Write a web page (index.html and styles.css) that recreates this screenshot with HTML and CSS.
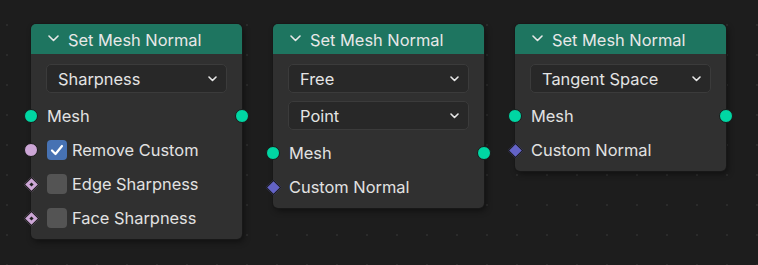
FILE: index.html
```html
<!DOCTYPE html>
<html lang="en">

	<head>
		<meta charset="UTF-8">
		<title>Set Mesh Normal</title>
		<link rel="stylesheet" href="styles.css">
	</head>

	<body>
		<div class="canvas">

			<!--节点 1: Sharpness-->
			<div class="node">
				<div class="node_head">
					<svg class="head_arrow" width="11" height="7" viewBox="0 0 11 7"><path d="M1 1 L5.5 5.5 L10 1" /></svg>
					<span>Set Mesh Normal</span>
				</div>
				<div class="node_body">
					<div class="menu">
						<span>Sharpness</span>
						<svg class="menu_arrow" width="9" height="6" viewBox="0 0 9 6"><path d="M1 1 L4.5 4.5 L8 1" /></svg>
					</div>
					<div class="rows">
						<div class="row">
							<i class="sock sock_in mesh"></i>
							<span class="label">Mesh</span>
							<i class="sock sock_out mesh"></i>
						</div>
						<div class="row">
							<i class="sock sock_in bool"></i>
							<span class="check on">
								<svg width="14" height="12" viewBox="0 0 14 12"><path d="M2 6.5 L5.5 10 L12 2" /></svg>
							</span>
							<span class="label">Remove Custom</span>
						</div>
						<div class="row">
							<i class="dia dia_bool"><b></b></i>
							<span class="check"></span>
							<span class="label">Edge Sharpness</span>
						</div>
						<div class="row">
							<i class="dia dia_bool"><b></b></i>
							<span class="check"></span>
							<span class="label">Face Sharpness</span>
						</div>
					</div>
				</div>
			</div>

			<!--节点 2: Free / Point-->
			<div class="node">
				<div class="node_head">
					<svg class="head_arrow" width="11" height="7" viewBox="0 0 11 7"><path d="M1 1 L5.5 5.5 L10 1" /></svg>
					<span>Set Mesh Normal</span>
				</div>
				<div class="node_body">
					<div class="menu">
						<span>Free</span>
						<svg class="menu_arrow" width="9" height="6" viewBox="0 0 9 6"><path d="M1 1 L4.5 4.5 L8 1" /></svg>
					</div>
					<div class="menu">
						<span>Point</span>
						<svg class="menu_arrow" width="9" height="6" viewBox="0 0 9 6"><path d="M1 1 L4.5 4.5 L8 1" /></svg>
					</div>
					<div class="rows">
						<div class="row">
							<i class="sock sock_in mesh"></i>
							<span class="label">Mesh</span>
							<i class="sock sock_out mesh"></i>
						</div>
						<div class="row">
							<i class="dia dia_vec"></i>
							<span class="label">Custom Normal</span>
						</div>
					</div>
				</div>
			</div>

			<!--节点 3: Tangent Space-->
			<div class="node">
				<div class="node_head">
					<svg class="head_arrow" width="11" height="7" viewBox="0 0 11 7"><path d="M1 1 L5.5 5.5 L10 1" /></svg>
					<span>Set Mesh Normal</span>
				</div>
				<div class="node_body">
					<div class="menu">
						<span>Tangent Space</span>
						<svg class="menu_arrow" width="9" height="6" viewBox="0 0 9 6"><path d="M1 1 L4.5 4.5 L8 1" /></svg>
					</div>
					<div class="rows">
						<div class="row">
							<i class="sock sock_in mesh"></i>
							<span class="label">Mesh</span>
							<i class="sock sock_out mesh"></i>
						</div>
						<div class="row">
							<i class="dia dia_vec"></i>
							<span class="label">Custom Normal</span>
						</div>
					</div>
				</div>
			</div>

		</div>
	</body>

</html>
```

FILE: styles.css
```css
/*节点编辑器背景*/

body {
	margin: 0;
	width: 758px;
	height: 265px;
	overflow: hidden;
	background-color: #1d1d1d;
	background-image: radial-gradient(circle, #2b2b2b 0.9px, transparent 1.3px);
	background-size: 30px 30px;
	background-position: -8px 10px;
	font-family: Inter, "Noto Sans", sans-serif;
	font-size: 16.4px;
	color: #e2e2e2;
}

.canvas {
	display: flex;
	align-items: flex-start;
	gap: 31px;
	padding-top: 24px;
	padding-left: 31px;
}

/*节点*/

.node {
	width: 211px;
	background-color: #303030;
	border-radius: 5px;
	box-shadow: 0 0 0 1px #181818, 2px 3px 6px rgba(0, 0, 0, 0.45);
}

.node_head {
	height: 30px;
	background-color: #1e7560;
	border-radius: 5px 5px 0 0;
	display: flex;
	align-items: center;
	padding-left: 17px;
	padding-top: 2px;
	box-sizing: border-box;
	color: #e8e8e8;
}

.head_arrow {
	margin-right: 9px;
	margin-top: -4px;
}

.head_arrow path,
.menu_arrow path {
	fill: none;
	stroke: #e8e8e8;
	stroke-width: 1.6;
	stroke-linecap: round;
	stroke-linejoin: round;
}

.node_body {
	padding: 10px 0 4px 0;
	display: flex;
	flex-direction: column;
	gap: 8px;
}

/*下拉菜单*/

.menu {
	height: 29px;
	margin: 0 15px;
	box-sizing: border-box;
	background-color: #282828;
	border: 1px solid #3b3b3b;
	border-radius: 5px;
	display: flex;
	align-items: center;
	justify-content: space-between;
	padding: 0 9px 0 11px;
	color: #e4e4e4;
}

/*插槽行*/

.rows {
	margin-top: -2px;
}

.row {
	position: relative;
	height: 34px;
	display: flex;
	align-items: center;
	padding-left: 16px;
}

.label {
	white-space: nowrap;
}

.check {
	width: 20px;
	height: 20px;
	border-radius: 4px;
	background-color: #545454;
	margin-right: 5px;
	display: flex;
	align-items: center;
	justify-content: center;
}

.check.on {
	background-color: #4772b3;
}

.check path {
	fill: none;
	stroke: #ffffff;
	stroke-width: 2.2;
	stroke-linecap: round;
	stroke-linejoin: round;
}

.sock {
	position: absolute;
	top: 10px;
	width: 14px;
	height: 14px;
	border-radius: 50%;
	box-sizing: border-box;
	border: 1px solid #1a1a1a;
}

.sock_in {
	left: -7px;
}

.sock_out {
	right: -7px;
}

.mesh {
	background-color: #00d6a3;
}

.bool {
	background-color: #cca6d6;
}

.dia {
	position: absolute;
	left: -5.5px;
	top: 11.5px;
	width: 11px;
	height: 11px;
	box-sizing: border-box;
	border: 1px solid #1a1a1a;
	transform: rotate(45deg);
	display: flex;
	align-items: center;
	justify-content: center;
}

.dia_bool {
	background-color: #cca6d6;
}

.dia_vec {
	background-color: #6363c7;
}

.dia b {
	width: 3px;
	height: 3px;
	background-color: #1d1d1d;
}
```
